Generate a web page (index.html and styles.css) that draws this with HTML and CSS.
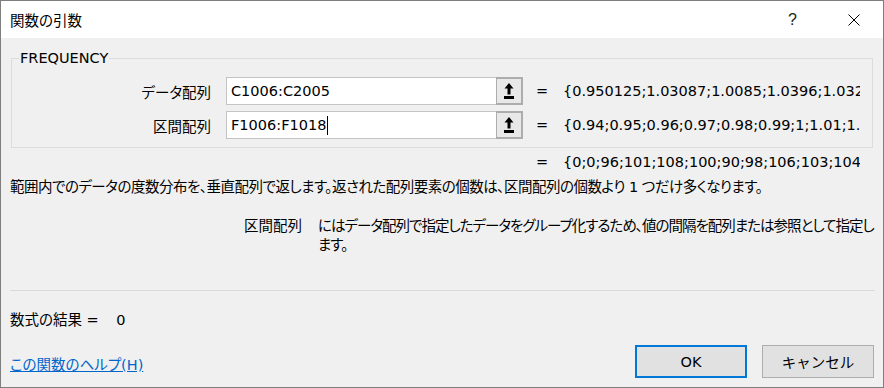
FILE: index.html
```html
<!DOCTYPE html>
<html lang="ja">
<head>
  <meta charset="UTF-8" />
  <title>関数の引数</title>
  <link rel="stylesheet" href="styles.css">
</head>
<body>
  <div class="dialog">
    <div class="titlebar">
      <span class="title">関数の引数</span>
      <span class="help">?</span>
      <span class="close">
        <svg width="12" height="12" viewBox="0 0 12 12">
          <path d="M0.5 0.5 L11.5 11.5 M11.5 0.5 L0.5 11.5" stroke="#000" stroke-width="1" fill="none"/>
        </svg>
      </span>
    </div>

    <fieldset class="args">
      <legend>FREQUENCY</legend>

      <div class="arg-row">
        <label class="arg-name">データ配列</label>
        <div class="ref">C1006:C2005</div>
        <button class="collapse" type="button">
          <svg width="12" height="18" viewBox="0 0 12 18">
            <path d="M6 1 L10.5 6.5 H7.5 V12.5 H4.5 V6.5 H1.5 Z" fill="#000"/>
            <rect x="1" y="14" width="10" height="3" fill="#000"/>
          </svg>
        </button>
        <span class="eq">=</span>
        <span class="value">{0.950125;1.03087;1.0085;1.0396;1.0325;0.98421;1.01247;0.99563}</span>
      </div>

      <div class="arg-row">
        <label class="arg-name">区間配列</label>
        <div class="ref">F1006:F1018<span class="caret"></span></div>
        <button class="collapse" type="button">
          <svg width="12" height="18" viewBox="0 0 12 18">
            <path d="M6 1 L10.5 6.5 H7.5 V12.5 H4.5 V6.5 H1.5 Z" fill="#000"/>
            <rect x="1" y="14" width="10" height="3" fill="#000"/>
          </svg>
        </button>
        <span class="eq">=</span>
        <span class="value">{0.94;0.95;0.96;0.97;0.98;0.99;1;1.01;1.02;1.03;1.04;1.05;1.06}</span>
      </div>
    </fieldset>

    <div class="result-row">
      <span class="eq">=</span>
      <span class="value">{0;0;96;101;108;100;90;98;106;103;104;95;99;0}</span>
    </div>

    <p class="summary">範囲内でのデータの度数分布を、垂直配列で返します。返された配列要素の個数は、区間配列の個数より 1 つだけ多くなります。</p>

    <div class="arg-help">
      <span class="arg-help-name">区間配列</span>
      <span class="arg-help-text">にはデータ配列で指定したデータをグループ化するため、値の間隔を配列または参照として指定します。</span>
    </div>

    <hr class="divider">

    <div class="formula-result">数式の結果 = <span class="formula-value">0</span></div>

    <div class="footer">
      <a href="#" class="help-link">この関数のヘルプ(H)</a>
      <button class="btn btn-default" type="button">OK</button>
      <button class="btn" type="button">キャンセル</button>
    </div>
  </div>
</body>
</html>
```

FILE: styles.css
```css
body {
  margin: 0;
  font-family: "DejaVu Sans", "Noto Sans CJK JP", sans-serif;
  font-size: 14.5px;
  font-feature-settings: "palt";
  color: #000;
  background-color: #f0f0f0;
}

.dialog {
  width: 884px;
  height: 388px;
  box-sizing: border-box;
  border: 1px solid #7e7e7e;
  background-color: #f0f0f0;
  display: flex;
  flex-direction: column;
  overflow: hidden;
}

/* title bar */

.titlebar {
  height: 37px;
  background-color: #fff;
  display: flex;
  align-items: center;
}

.title {
  padding-left: 9px;
  flex: 1;
}

.help {
  font-family: "Liberation Sans", sans-serif;
  font-size: 16px;
  color: #222;
  margin-right: 51px;
}

.close {
  display: flex;
  margin-right: 23px;
}

/* argument box */

.args {
  margin: 10px 10px 0 10px;
  padding: 9px 0 8px 0;
  border: 1px solid #dcdcdc;
  width: 862px;
  box-sizing: border-box;
  display: flex;
  flex-direction: column;
  gap: 6px;
}

.args legend {
  padding: 0 1px;
  margin-left: 7px;
  line-height: 20px;
}

.arg-row {
  display: flex;
  align-items: center;
  height: 28px;
}

.arg-name {
  width: 199px;
  text-align: right;
  padding-right: 15px;
}

.ref {
  width: 270px;
  height: 28px;
  box-sizing: border-box;
  background-color: #fff;
  border: 1px solid #c4c4c4;
  border-right: none;
  padding-left: 4px;
  display: flex;
  align-items: center;
}

.caret {
  display: inline-block;
  width: 1px;
  height: 19px;
  background-color: #000;
  margin-left: 1px;
}

.collapse {
  width: 27px;
  height: 28px;
  box-sizing: border-box;
  margin: 0;
  padding: 0;
  border: 2px solid #adadad;
  border-left-width: 1px;
  background-color: #e8e8e8;
  display: flex;
  align-items: center;
  justify-content: center;
}

.eq {
  width: 27px;
  padding-left: 13px;
}

.value {
  width: 297px;
  overflow: hidden;
  white-space: nowrap;
}

.result-row {
  display: flex;
  align-items: center;
  height: 20px;
  margin-top: 4px;
  padding-left: 522px;
}

/* descriptions */

.summary {
  margin: 5px 0 0 9px;
  line-height: 20px;
  letter-spacing: -0.5px;
  white-space: nowrap;
}

.arg-help {
  display: grid;
  grid-template-columns: 292px 562px;
  column-gap: 16px;
  margin: 20px 0 0 9px;
  line-height: 19px;
}

.arg-help-name {
  text-align: right;
}

.arg-help-text {
  letter-spacing: -1px;
}

.divider {
  margin: 35px 8px 0 9px;
  border: none;
  border-top: 1px solid #dadada;
  height: 0;
}

.formula-result {
  margin: 19px 0 0 9px;
  line-height: 20px;
}

.formula-value {
  margin-left: 13px;
}

/* footer */

.footer {
  display: flex;
  align-items: center;
  margin: 15px 9px 0 9px;
  height: 33px;
}

.help-link {
  flex: 1;
  color: #0066cc;
  padding-top: 4px;
}

.btn {
  width: 112px;
  height: 33px;
  margin-left: 15px;
  box-sizing: border-box;
  border: 1px solid #adadad;
  background-color: #e1e1e1;
  font-family: inherit;
  font-size: 14.5px;
  color: #000;
}

.btn-default {
  border: 2px solid #0078d7;
}
```
